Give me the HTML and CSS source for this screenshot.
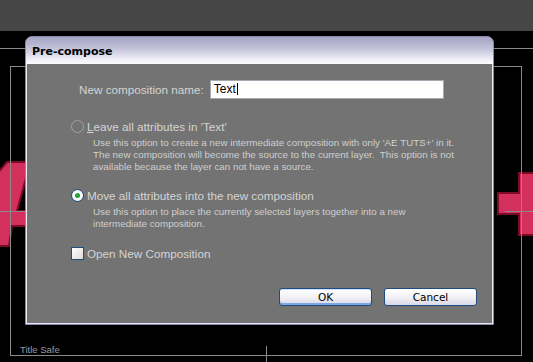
FILE: index.html
```html
<!DOCTYPE html>
<html lang="en">
<head>
    <meta charset="UTF-8">
    <title>Pre-compose</title>
    <link rel="stylesheet" href="styles.css">
</head>
<body>
    <div class="toolbar"></div>

    <div class="viewer">
        <!-- Composition viewer: guides and letters behind the dialog -->
        <svg class="comp" width="533" height="331" viewBox="0 31 533 331">
            <path class="letter" d="M7,162 H40 V226 H12 L9,246 H-4 V175 Z"/>
            <path class="counter" d="M26,178 H40 V211 H17 Z"/>
            <path class="letter" d="M498,193 H519 V173 H540 V235 H519 V214 H498 Z"/>
            <line class="guide" x1="0" y1="48.5" x2="533" y2="48.5"/>
            <rect class="guide" x="10.5" y="66.5" width="511" height="289"/>
            <line class="guide" x1="0" y1="211.5" x2="30" y2="211.5"/>
            <line class="guide" x1="505" y1="211.5" x2="533" y2="211.5"/>
            <line class="guide" x1="266.5" y1="346" x2="266.5" y2="362"/>
            <text class="safe-label" x="20" y="353">Title Safe</text>
        </svg>

        <div class="dialog">
            <div class="title-bar">Pre-compose</div>
            <div class="dialog-body">
                <div class="name-row">
                    <label for="compName">New composition name:</label>
                    <div class="text-field" id="compName">Text<span class="caret"></span></div>
                </div>

                <div class="option disabled">
                    <span class="radio"></span>
                    <span class="option-label"><u>L</u>eave all attributes in 'Text'</span>
                </div>
                <p class="desc">Use this option to create a new intermediate composition with only 'AE TUTS+' in it.<br>The new composition will become the source to the current layer.&nbsp; This option is not<br>available because the layer can not have a source.</p>

                <div class="option option-move">
                    <span class="radio checked"></span>
                    <span class="option-label">Move all attributes into the new composition</span>
                </div>
                <p class="desc">Use this option to place the currently selected layers together into a new<br>intermediate composition.</p>

                <div class="option option-open">
                    <span class="checkbox"></span>
                    <span class="option-label">Open New Composition</span>
                </div>

                <div class="buttons">
                    <button class="btn default">OK</button>
                    <button class="btn">Cancel</button>
                </div>
            </div>
        </div>
    </div>
</body>
</html>
```

FILE: styles.css
```css
body {
    margin: 0;
    width: 533px;
    height: 362px;
    overflow: hidden;
    background-color: #000;
    font-family: "Liberation Sans", Arial, sans-serif;
}
.toolbar {
    height: 31px;
    background-color: #464646;
}
.viewer {
    position: relative;
    height: 331px;
}
.comp {
    position: absolute;
    left: 0;
    top: 0;
}
.letter {
    fill: #d3305d;
    stroke: #7d0b25;
    stroke-width: 2;
}
.counter {
    fill: #000;
    stroke: #7d0b25;
    stroke-width: 2;
}
.guide {
    fill: none;
    stroke: #8a8a8a;
    stroke-width: 1;
}
.safe-label {
    fill: #9a9a9a;
    font-family: "Liberation Sans", Arial, sans-serif;
    font-size: 9.5px;
}

/* Dialog */
.dialog {
    position: absolute;
    left: 25px;
    top: 5px;
    width: 467px;
    height: 287px;
    border: 1px solid #8a89ad;
    border-radius: 7px 7px 0 0;
    background-color: #737373;
    box-shadow: inset 0 0 0 1px #ecebf4;
    overflow: hidden;
}
.title-bar {
    box-sizing: border-box;
    height: 27px;
    padding: 8px 0 0 6px;
    font-family: "DejaVu Sans", sans-serif;
    font-size: 11px;
    line-height: 13px;
    font-weight: bold;
    color: #000;
    background: linear-gradient(#a5a4c4, #c4c3d9 45%, #eeeef6 85%, #fafafc);
    border-bottom: 1px solid #fbfbfd;
}
.dialog-body {
    padding: 0 1px 0 1px;
    color: #d4d4d4;
}
.name-row {
    display: flex;
    align-items: center;
    gap: 6px;
    margin-top: 16px;
    padding-left: 52px;
    font-size: 11.7px;
}
.text-field {
    box-sizing: border-box;
    width: 234px;
    height: 19px;
    padding-left: 3px;
    border: 1px solid #a4aab2;
    background-color: #fff;
    color: #000;
    font-size: 12px;
    line-height: 17px;
}
.caret {
    display: inline-block;
    width: 1px;
    height: 12px;
    margin-left: 1px;
    vertical-align: -2px;
    background-color: #000;
}
.option {
    display: flex;
    align-items: center;
    gap: 3px;
    height: 14px;
    margin-top: 20px;
    padding-left: 44px;
    font-size: 11.7px;
}
.option-move {
    margin-top: 15px;
}
.option-open {
    margin-top: 16px;
}
.radio {
    box-sizing: border-box;
    width: 13px;
    height: 13px;
    border-radius: 50%;
    border: 1px solid #1d4f80;
    background: radial-gradient(circle, #fff 40%, #dedee6);
    position: relative;
}
.option.disabled .radio {
    border-color: #a3a3a3;
    background: none;
}
.radio.checked::after {
    content: "";
    position: absolute;
    left: 3px;
    top: 3px;
    width: 5px;
    height: 5px;
    border-radius: 50%;
    background-color: #22a335;
}
.checkbox {
    box-sizing: border-box;
    width: 13px;
    height: 13px;
    border: 1px solid #1d4f80;
    background: linear-gradient(135deg, #ffffff, #dcdcd6);
}
.desc {
    margin: 4px 0 0 66px;
    font-size: 9.8px;
    line-height: 12px;
    color: #cfcfcf;
}
.buttons {
    display: flex;
    justify-content: flex-end;
    gap: 12px;
    margin-top: 28px;
    padding-right: 15px;
}
.btn {
    box-sizing: border-box;
    width: 93px;
    height: 18px;
    padding: 0;
    border: 1px solid #1f4c80;
    border-radius: 3px;
    background: linear-gradient(#ffffff, #f2f2f6 50%, #d9d8e6);
    font-family: "DejaVu Sans", sans-serif;
    font-size: 10.5px;
    color: #000;
}
.btn.default {
    box-shadow: inset 0 -2px 0 #7fa6e2, inset 0 1px 0 #cddff8;
}
```
